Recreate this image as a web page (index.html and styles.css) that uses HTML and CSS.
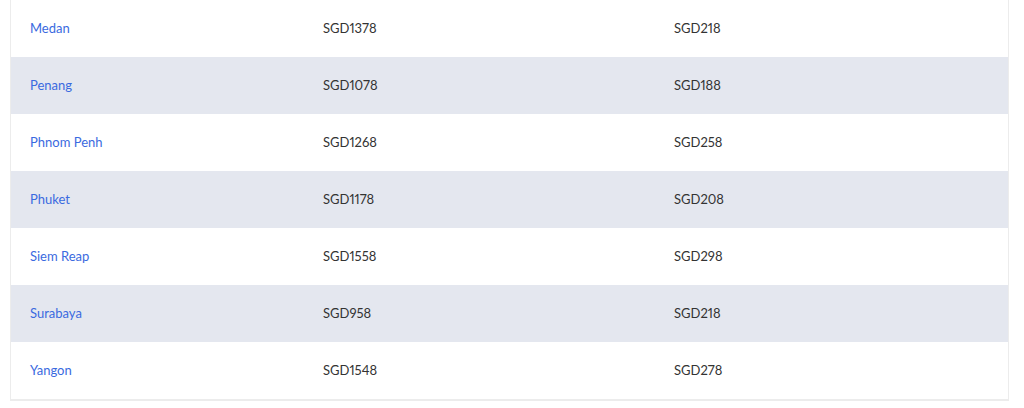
FILE: index.html
```html
<!DOCTYPE html>
<html>
<head>
<meta charset="utf-8">
<link rel="stylesheet" href="styles.css">
</head>
<body>
<div class="table">
  <div class="row"><div class="cell city">Medan</div><div class="cell">SGD1378</div><div class="cell">SGD218</div></div>
  <div class="row alt"><div class="cell city">Penang</div><div class="cell">SGD1078</div><div class="cell">SGD188</div></div>
  <div class="row"><div class="cell city">Phnom Penh</div><div class="cell">SGD1268</div><div class="cell">SGD258</div></div>
  <div class="row alt"><div class="cell city">Phuket</div><div class="cell">SGD1178</div><div class="cell">SGD208</div></div>
  <div class="row"><div class="cell city">Siem Reap</div><div class="cell">SGD1558</div><div class="cell">SGD298</div></div>
  <div class="row alt"><div class="cell city">Surabaya</div><div class="cell">SGD958</div><div class="cell">SGD218</div></div>
  <div class="row"><div class="cell city">Yangon</div><div class="cell">SGD1548</div><div class="cell">SGD278</div></div>
</div>
</body>
</html>
```
FILE: styles.css
```css
html, body {
  margin: 0;
  padding: 0;
  background: #fff;
}
body {
  font-family: "Lato", "Liberation Sans", sans-serif;
  font-size: 13px;
  color: #333;
  font-variant-numeric: proportional-nums;
}
.table {
  margin-left: 10px;
  width: 997px;
  border: 1px solid #ececec;
  border-top: none;
  border-bottom-width: 2px;
}
.row {
  display: grid;
  grid-template-columns: 293px 351px 1fr;
  height: 57px;
  align-items: center;
  background: #fff;
}
.row.alt {
  background: #e4e7ef;
}
.cell {
  padding-left: 19px;
  padding-bottom: 2px;
}
.city {
  color: #3a6ae0;
}
```
